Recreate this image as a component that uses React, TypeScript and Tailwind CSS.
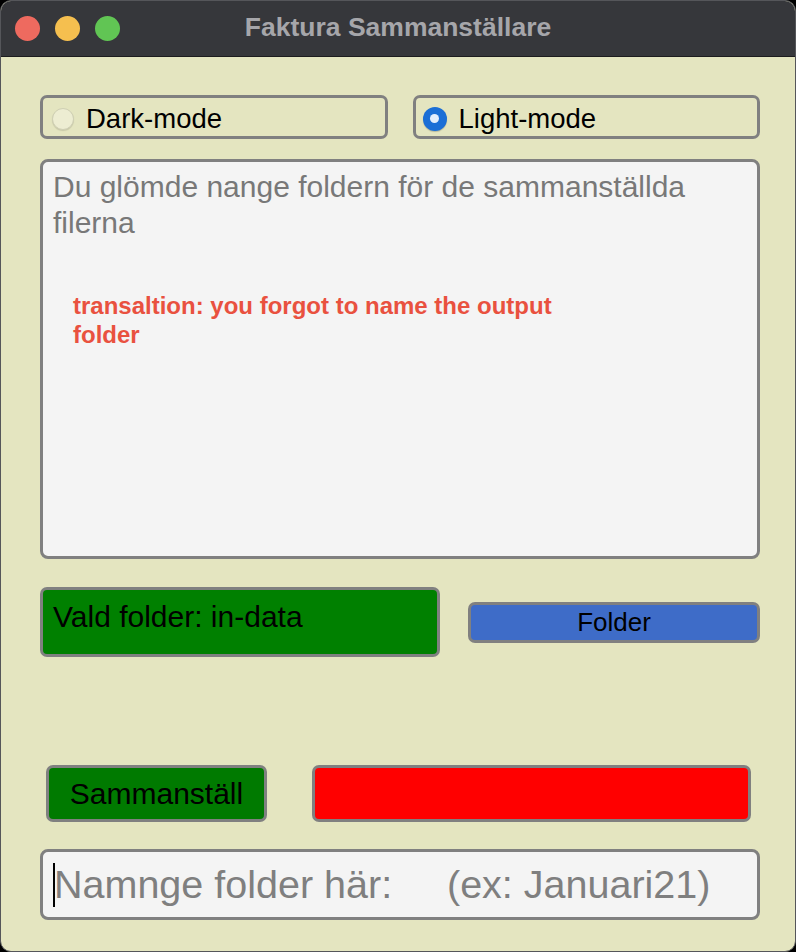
export default function App() {
  return (
    <div className="w-[796px] h-[952px] bg-black" style={{ fontFamily: '"Liberation Sans", Arial, sans-serif' }}>
      <div className="w-full h-full flex flex-col rounded-[11px] overflow-hidden border border-[#55565a] bg-[#e4e5c0]">
        {/* Title bar */}
        <div className="relative h-[56px] shrink-0 bg-[#36373b] border-b border-[#1c1c1e] flex items-center justify-center">
          <div className="absolute left-[14px] top-[15px] flex gap-[15px]">
            <span className="w-[25px] h-[25px] rounded-full bg-[#ee6a5f]" />
            <span className="w-[25px] h-[25px] rounded-full bg-[#f5bf4f]" />
            <span className="w-[25px] h-[25px] rounded-full bg-[#61c554]" />
          </div>
          <span className="text-[26.5px] font-bold text-[#a6a6aa] -mt-[2px]">Faktura Sammanställare</span>
        </div>

        {/* Content */}
        <div className="flex flex-col pl-[39px] pr-[35px] pt-[38px]">
          {/* Mode radios */}
          <div className="grid grid-cols-2 gap-[25px]">
            <div className="h-[44px] flex items-center gap-[12px] pl-[9px] pt-[3px] border-[3px] border-[#808080] rounded-[7px]">
              <span className="w-[22px] h-[22px] rounded-full bg-[#ededd2] border border-[#cfcfb4] shadow-[0_1px_1px_rgba(0,0,0,0.12)]" />
              <span className="text-[27.5px] text-black leading-none">Dark-mode</span>
            </div>
            <div className="h-[44px] flex items-center gap-[12px] pl-[7px] pt-[3px] border-[3px] border-[#808080] rounded-[7px]">
              <span className="w-[24px] h-[24px] rounded-full bg-[#1b6fd6] flex items-center justify-center shadow-[0_1px_1px_rgba(0,0,0,0.2)]">
                <span className="w-[9px] h-[9px] rounded-full bg-[#e3eefc]" />
              </span>
              <span className="text-[27.5px] text-black leading-none">Light-mode</span>
            </div>
          </div>

          {/* Message area */}
          <div className="mt-[20px] h-[400px] bg-[#f4f4f4] border-[3px] border-[#808080] rounded-[8px] px-[10px] pt-[7px]">
            <p className="text-[30px] leading-[36px] text-[#787878]">Du glömde nange foldern för de sammanställda filerna</p>
            <p className="mt-[50px] ml-[20px] w-[510px] text-[24px] leading-[29px] font-bold text-[#e9513f]">
              transaltion: you forgot to name the output folder
            </p>
          </div>

          {/* Folder row */}
          <div className="mt-[28px] flex items-center gap-[28px]">
            <div className="w-[400px] h-[70px] bg-[#008000] border-[3px] border-[#808080] rounded-[7px] px-[10px] pt-[12px]">
              <span className="text-[30px] leading-none text-black">Vald folder: in-data</span>
            </div>
            <button className="flex-1 h-[41px] bg-[#3e6cc8] border-[3px] border-[#808080] rounded-[7px] flex items-center justify-center text-[26px] text-black">
              Folder
            </button>
          </div>

          {/* Action row */}
          <div className="mt-[108px] flex gap-[45px] pl-[6px] pr-[9px]">
            <button className="w-[221px] h-[57px] bg-[#007a00] border-[3px] border-[#808080] rounded-[7px] flex items-center justify-center text-[30px] text-black">
              Sammanställ
            </button>
            <div className="flex-1 h-[57px] bg-[#ff0000] border-[3px] border-[#808080] rounded-[7px]" />
          </div>

          {/* Name input */}
          <div className="mt-[27px] h-[71px] bg-[#f4f4f4] border-[3px] border-[#808080] rounded-[8px] flex items-center pl-[10px]">
            <span className="w-[2px] h-[44px] bg-black" />
            <span className="-ml-[1px] whitespace-pre text-[39.5px] leading-none text-[#7f7f7f]">Namnge folder här:     (ex: Januari21)</span>
          </div>
        </div>
      </div>
    </div>
  );
}
